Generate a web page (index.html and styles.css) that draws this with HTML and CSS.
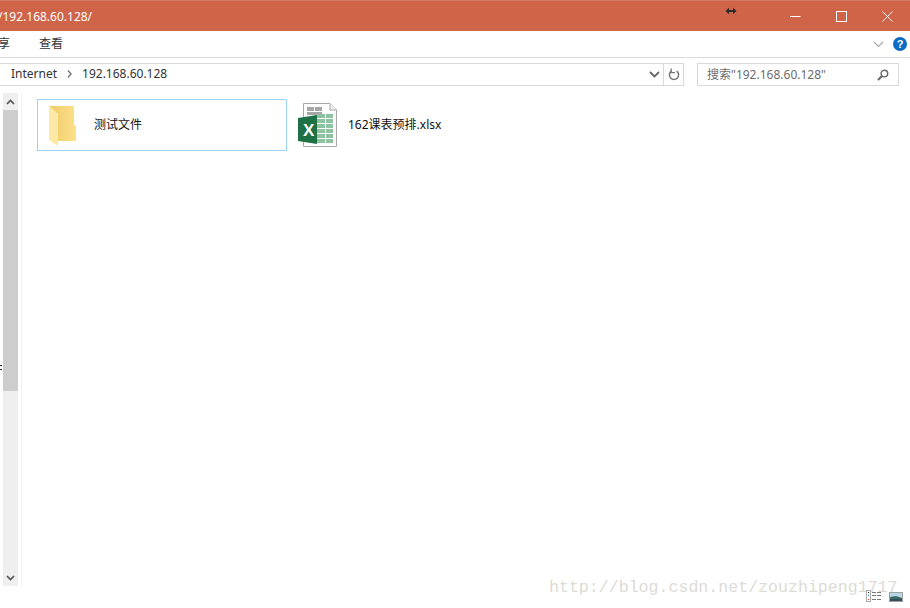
FILE: index.html
```html
<!DOCTYPE html>
<html lang="zh-CN">
<head>
    <meta charset="UTF-8">
    <title>192.168.60.128</title>
    <link rel="stylesheet" href="styles.css">
</head>
<body>
    <div class="titlebar">
        <div class="title-text">/192.168.60.128/</div>
        <svg class="resize-cursor" width="12" height="8" viewBox="0 0 12 8"><path d="M0.5 4 L4 0.8 V3 H8 V0.8 L11.5 4 L8 7.2 V5 H4 V7.2 Z" fill="#2b2b2b"/></svg>
        <div class="win-buttons">
            <div class="win-button"><svg width="11" height="11" viewBox="0 0 11 11"><path d="M0 5.5 H10.5" stroke="#fff" fill="none"/></svg></div>
            <div class="win-button"><svg width="11" height="11" viewBox="0 0 11 11"><rect x="0.5" y="0.5" width="10" height="10" stroke="#fff" fill="none"/></svg></div>
            <div class="win-button"><svg width="11" height="11" viewBox="0 0 11 11"><path d="M0.5 0.5 L10.5 10.5 M10.5 0.5 L0.5 10.5" stroke="#fff" fill="none"/></svg></div>
        </div>
    </div>

    <div class="menubar">
        <div class="menu-item share">享</div>
        <div class="menu-item">查看</div>
        <svg class="menu-chevron" width="11" height="7" viewBox="0 0 11 7"><path d="M1 1 L5.5 5.5 L10 1" stroke="#a8a8a8" stroke-width="1.2" fill="none"/></svg>
        <div class="help">?</div>
    </div>

    <div class="addressrow">
        <div class="addressbox">
            <div class="crumbs">
                <span>Internet</span>
                <svg width="5" height="8" viewBox="0 0 5 8"><path d="M1 0.5 L4 4 L1 7.5" stroke="#777" stroke-width="1.4" fill="none"/></svg>
                <span>192.168.60.128</span>
            </div>
            <div class="addr-drop"><svg width="11" height="7" viewBox="0 0 11 7"><path d="M1 1 L5.5 5.5 L10 1" stroke="#666" stroke-width="1.8" fill="none"/></svg></div>
            <div class="addr-refresh"><svg width="12" height="13" viewBox="0 0 12 13"><path d="M8.6 3.2 A4.6 4.6 0 1 1 3.4 3.2" stroke="#777" stroke-width="1.5" fill="none"/><path d="M3.2 0.5 V4.6 H7" stroke="#777" stroke-width="1.3" fill="none"/></svg></div>
        </div>
        <div class="searchbox">
            <span>搜索"192.168.60.128"</span>
            <svg width="12" height="12" viewBox="0 0 12 12"><circle cx="7.4" cy="4.6" r="3.3" stroke="#666" stroke-width="1.4" fill="none"/><path d="M5 7 L1 11" stroke="#666" stroke-width="2" fill="none"/></svg>
        </div>
    </div>

    <div class="main">
        <div class="edge-mark"></div>
        <div class="sidebar">
            <div class="scroll-btn"><svg width="9" height="6" viewBox="0 0 9 6"><path d="M1 5 L4.5 1.5 L8 5" stroke="#555" stroke-width="1.7" fill="none"/></svg></div>
            <div class="scroll-thumb"></div>
            <div class="scroll-track"></div>
            <div class="scroll-btn"><svg width="9" height="6" viewBox="0 0 9 6"><path d="M1 1 L4.5 4.5 L8 1" stroke="#555" stroke-width="1.7" fill="none"/></svg></div>
        </div>
        <div class="files">
            <div class="file selected">
                <svg class="folder-icon" width="28" height="41" viewBox="0 0 28 41">
                    <defs>
                        <linearGradient id="folderBack" x1="0" y1="0" x2="1" y2="0">
                            <stop offset="0" stop-color="#eecb68"/>
                            <stop offset="1" stop-color="#fde08a"/>
                        </linearGradient>
                    </defs>
                    <path d="M0 0 H25 V19 L27 20 V35 H9 V8 Z" fill="url(#folderBack)"/>
                    <path d="M0 0 L9 8 V40 L0 34 Z" fill="#fde8a4"/>
                </svg>
                <div class="file-name">测试文件</div>
            </div>
            <div class="file">
                <svg class="excel-icon" width="40" height="44" viewBox="0 0 40 44">
                    <path d="M5.5 0.5 H32 L38.5 7 V43.5 H5.5 Z" fill="#fff" stroke="#a8a8a8"/>
                    <path d="M32 0.5 V7 H38.5" fill="#f2f2f2" stroke="#a8a8a8"/>
                    <rect x="9" y="4" width="7" height="4" fill="#a6a6a6"/>
                    <rect x="17" y="4" width="7" height="4" fill="#a6a6a6"/>
                    <rect x="9" y="9" width="15" height="3" fill="#a6a6a6"/>
                    <rect x="19" y="11" width="8" height="4" fill="#8ec3a2"/>
                    <rect x="28" y="11" width="7" height="4" fill="#8ec3a2"/>
                    <rect x="19" y="16" width="8" height="4" fill="#8ec3a2"/>
                    <rect x="28" y="16" width="7" height="4" fill="#8ec3a2"/>
                    <rect x="19" y="21" width="8" height="4" fill="#8ec3a2"/>
                    <rect x="28" y="21" width="7" height="4" fill="#8ec3a2"/>
                    <rect x="19" y="26" width="8" height="4" fill="#8ec3a2"/>
                    <rect x="28" y="26" width="7" height="4" fill="#8ec3a2"/>
                    <rect x="19" y="31" width="8" height="4" fill="#8ec3a2"/>
                    <rect x="28" y="31" width="7" height="4" fill="#8ec3a2"/>
                    <rect x="19" y="36" width="8" height="4" fill="#8ec3a2"/>
                    <rect x="28" y="36" width="7" height="4" fill="#8ec3a2"/>
                    <path d="M0 15 L19 12 V41 L0 38 Z" fill="#1e7145"/>
                </svg>
                <span class="excel-x">X</span>
                <div class="file-name">162课表预排.xlsx</div>
            </div>
        </div>
    </div>

    <div class="watermark">http://blog.csdn.net/zouzhipeng1717</div>
    <div class="view-icons">
        <svg width="16" height="12" viewBox="0 0 16 12">
            <rect x="0.5" y="0.5" width="4" height="11" fill="#fff" stroke="#aaa"/>
            <rect x="2" y="2" width="1" height="1" fill="#333"/>
            <rect x="2" y="5" width="1" height="1" fill="#3a7bd5"/>
            <rect x="2" y="9" width="1" height="1" fill="#d33"/>
            <path d="M6 2.5 H10 M11 2.5 H15 M6 5.5 H10 M11 5.5 H15 M6 9.5 H10 M11 9.5 H15" stroke="#777"/>
        </svg>
        <svg class="view-picture" width="14" height="10" viewBox="0 0 14 10">
            <rect x="0.5" y="0.5" width="13" height="9" fill="#b9d6e8" stroke="#a0a0a0"/>
            <path d="M1 5 L7 4 L13 6 V9 H1 Z" fill="#3a6a62"/>
            <path d="M1 7 H13 V9 H1 Z" fill="#2f4f5f"/>
        </svg>
    </div>
</body>
</html>
```

FILE: styles.css
```css
body {
    margin: 0;
    width: 910px;
    height: 608px;
    overflow: hidden;
    position: relative;
    background-color: #fff;
    font-family: "Noto Sans", "Noto Sans CJK SC", sans-serif;
    font-size: 12px;
    color: #1a1a1a;
}

.titlebar {
    display: flex;
    align-items: center;
    height: 31px;
    background-color: #cf6449;
    box-sizing: border-box;
    border-top: 1px solid #d67a62;
    position: relative;
}

.title-text {
    margin-left: -2px;
    font-size: 12px;
    color: #fff;
    flex: 1;
}

.resize-cursor {
    position: absolute;
    left: 725px;
    top: 6px;
}

.win-buttons {
    display: flex;
}

.win-button {
    width: 46px;
    height: 30px;
    display: flex;
    align-items: center;
    justify-content: center;
}

.menubar {
    display: flex;
    align-items: center;
    height: 27px;
    box-sizing: border-box;
    border-bottom: 1px solid #dadada;
    padding-right: 3px;
}

.menu-item {
    color: #333;
    padding-bottom: 2px;
    line-height: 17px;
}

.menu-item.share {
    margin-left: -2px;
    width: 41px;
}

.menu-chevron {
    margin-left: auto;
    margin-right: 9px;
}

.help {
    width: 14px;
    height: 14px;
    border-radius: 50%;
    background-color: #0a6cc4;
    color: #fff;
    font-family: "Liberation Sans", sans-serif;
    font-weight: bold;
    font-size: 11px;
    line-height: 14px;
    text-align: center;
}

.addressrow {
    display: flex;
    margin-top: 5px;
    padding-right: 11px;
    gap: 13px;
}

.addressbox {
    flex: 1;
    display: flex;
    align-items: center;
    height: 23px;
    box-sizing: border-box;
    border: 1px solid #d9d9d9;
    border-left: none;
}

.crumbs {
    flex: 1;
    display: flex;
    align-items: center;
    gap: 10px;
    padding-left: 11px;
    padding-bottom: 2px;
    color: #333;
    line-height: 17px;
}

.addr-drop {
    width: 17px;
    height: 21px;
    display: flex;
    align-items: center;
    justify-content: center;
}

.addr-refresh {
    width: 20px;
    height: 21px;
    box-sizing: border-box;
    border-left: 1px solid #d9d9d9;
    display: flex;
    align-items: center;
    justify-content: center;
}

.searchbox {
    width: 202px;
    height: 23px;
    box-sizing: border-box;
    border: 1px solid #d9d9d9;
    display: flex;
    align-items: center;
    justify-content: space-between;
    padding: 0 9px;
    color: #6d6d6d;
    line-height: 17px;
}

.main {
    display: flex;
    height: 500px;
    position: relative;
}

.edge-mark {
    position: absolute;
    left: 0;
    top: 279px;
    width: 2px;
    height: 3px;
    border-top: 1px solid #222;
    border-bottom: 1px solid #222;
}

.sidebar {
    margin: 7px 0 0 3px;
    width: 15px;
    height: 493px;
    display: flex;
    flex-direction: column;
    background-color: #efefef;
    border-right: 3px solid #fff;
    box-shadow: 1px 0 0 #f0f0f0;
}

.scroll-btn {
    height: 17px;
    display: flex;
    align-items: center;
    justify-content: center;
    flex-shrink: 0;
}

.scroll-thumb {
    height: 281px;
    background-color: #cdcdcd;
}

.scroll-track {
    flex: 1;
}

.files {
    display: flex;
    gap: 10px;
    padding: 13px 0 0 16px;
    align-items: flex-start;
}

.file {
    width: 250px;
    height: 52px;
    box-sizing: border-box;
    border: 1px solid transparent;
    display: flex;
    align-items: center;
    position: relative;
}

.file.selected {
    border-color: #99d1ff;
}

.folder-icon {
    margin: 3px 0 0 11px;
}

.excel-x {
    position: absolute;
    left: 5px;
    top: 21px;
    color: #fff;
    font-family: "Liberation Sans", sans-serif;
    font-size: 17px;
    font-weight: bold;
}

.file-name {
    margin-left: 17px;
    margin-bottom: 2px;
    color: #111;
    line-height: 17px;
}

.file:not(.selected) .file-name {
    margin-left: 10px;
}

.watermark {
    position: absolute;
    left: 549px;
    top: 578px;
    font-family: "Liberation Mono", monospace;
    font-size: 16.6px;
    color: #dedbd5;
    white-space: nowrap;
}

.view-icons {
    position: absolute;
    left: 866px;
    top: 590px;
    display: flex;
    gap: 7px;
    align-items: flex-start;
}

.view-picture {
    margin-top: 2px;
}
```
